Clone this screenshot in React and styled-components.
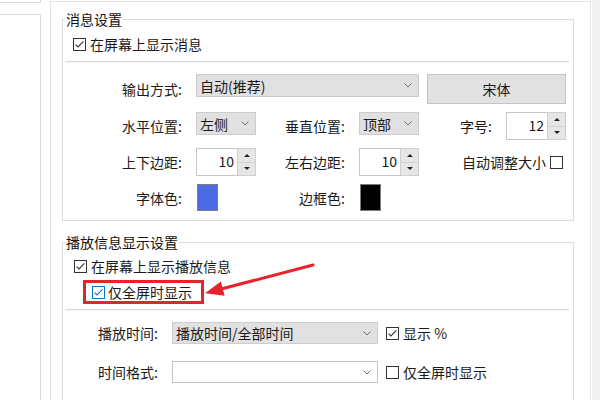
import React from 'react';
import styled, { createGlobalStyle } from 'styled-components';

const GlobalStyle = createGlobalStyle`
  html, body { margin: 0; padding: 0; background: #fff; }
  body {
    font-family: "Noto Sans CJK SC", "Noto Sans", sans-serif;
    font-size: 14px;
    color: #1a1a1a;
  }
  * { box-sizing: border-box; }
`;

const Page = styled.div`
  position: relative;
  display: flex;
  width: 600px;
  height: 400px;
  overflow: hidden;
`;

const LeftCol = styled.div`
  width: 41px;
  display: flex;
  flex-direction: column;
`;

const LeftTop = styled.div`
  height: 3px;
  border-right: 1px solid #d9d9d9;
  border-bottom: 1px solid #d9d9d9;
`;

const LeftList = styled.div`
  margin-top: 11px;
  flex: 1;
  border-top: 1px solid #d9d9d9;
  border-right: 1px solid #d9d9d9;
`;

const Main = styled.div`
  margin: 1px 0 0 9px;
  width: 541px;
  border: 1px solid #e3e3e3;
  border-bottom: none;
  padding: 10px 0 0 11px;
`;

const RightStrip = styled.div`
  flex: 1;
  margin-left: 1px;
  background: #f0f0f0;
`;

const Group = styled.fieldset`
  width: 512px;
  min-width: 0;
  margin: ${p => p.$top}px 0 0 0;
  padding: 0 0 ${p => p.$bottom}px 0;
  border: 1px solid #dcdcdc;
`;

const Legend = styled.legend`
  margin-left: 2px;
  padding: 0 1px;
  font-size: 14px;
  line-height: 14px;
  color: #111;
`;

const CheckRow = styled.div`
  display: flex;
  align-items: center;
  gap: 4px;
  height: 14px;
  line-height: 14px;
  margin-top: ${p => p.$top}px;
  padding-left: ${p => p.$left}px;
`;

const HighlightBox = styled.div`
  display: flex;
  align-items: center;
  gap: 3px;
  width: 121px;
  height: 24px;
  margin: 7px 0 0 20px;
  padding-left: 6px;
  border: 3px solid #e5242a;
  line-height: 14px;
`;

const Separator = styled.div`
  height: 2px;
  margin: ${p => p.$top}px 4px 0 2px;
  background: #dadada;
  border-bottom: 1px solid #f4f4f4;
`;

const FormGrid = styled.div`
  display: grid;
  grid-template-columns: ${p => p.$cols};
  grid-template-rows: ${p => p.$rows};
  row-gap: ${p => p.$gap}px;
  align-items: center;
  margin-top: 11px;
`;

const Label = styled.div`
  text-align: right;
  padding-right: 14px;
  line-height: 14px;
  white-space: nowrap;
`;

const SelectBox = styled.div`
  grid-column: ${p => p.$span || 'auto'};
  align-self: ${p => p.$align || 'center'};
  height: ${p => p.$h || 23}px;
  display: flex;
  align-items: center;
  justify-content: space-between;
  padding: 0 6px 0 3px;
  background: ${p => (p.$white ? '#fff' : '#e1e1e1')};
  border: 1px solid ${p => (p.$white ? '#c4c4c4' : '#cdcdcd')};
  line-height: 14px;
  white-space: nowrap;
`;

const PushButton = styled.div`
  grid-column: 5 / 7;
  height: 30px;
  margin-left: 8px;
  display: flex;
  align-items: center;
  justify-content: center;
  background: #e1e1e1;
  border: 1px solid #c4c4c4;
  line-height: 14px;
`;

const SpinWrap = styled.div`
  display: flex;
  height: 28px;
`;

const SpinField = styled.div`
  flex: 1;
  display: flex;
  align-items: center;
  justify-content: flex-end;
  padding: 0 3px 2px 0;
  background: #fff;
  border: 1px solid #c6c6c6;
  border-right: none;
  line-height: 14px;
`;

const SpinButtons = styled.div`
  width: 19px;
  display: flex;
  flex-direction: column;
  border: 1px solid #cfcfcf;
`;

const SpinButton = styled.div`
  flex: 1;
  display: flex;
  align-items: center;
  justify-content: center;
  background: #e6e6e6;
  & + & { border-top: 1px solid #d2d2d2; }
  &::after {
    content: '';
    border-left: 3px solid transparent;
    border-right: 3px solid transparent;
    ${p => (p.$down ? 'border-top: 3px solid #222;' : 'border-bottom: 3px solid #222;')}
  }
`;

const Swatch = styled.div`
  width: 21px;
  height: 27px;
  margin-left: 1px;
  background: ${p => p.$color};
  border: 1px solid #7d7d7d;
`;

const EndCheck = styled.div`
  grid-column: 5 / 7;
  justify-self: end;
  margin-right: 3px;
  display: flex;
  align-items: center;
  gap: 4px;
  line-height: 14px;
`;

const SideCheck = styled.div`
  display: flex;
  align-items: center;
  gap: 4px;
  margin-left: 8px;
  line-height: 14px;
  white-space: nowrap;
`;

const ArrowLayer = styled.svg`
  position: absolute;
  left: 200px;
  top: 255px;
  pointer-events: none;
`;

const Checkbox = ({ checked, blue }) => {
  const c = blue ? '#0a74d0' : '#333';
  return (
    <svg width="13" height="13" viewBox="0 0 13 13">
      <rect x="0.5" y="0.5" width="12" height="12" fill="#fff" stroke={c} />
      {checked && <polyline points="2.6,6.6 5,9 10.4,3.4" fill="none" stroke={c} strokeWidth="1.1" />}
    </svg>
  );
};

const Chevron = () => (
  <svg width="8" height="5" viewBox="0 0 8 5">
    <polyline points="0.5,0.5 4,4 7.5,0.5" fill="none" stroke="#707070" strokeWidth="1" />
  </svg>
);

const Select = ({ text, ...rest }) => (
  <SelectBox {...rest}>
    <span>{text}</span>
    <Chevron />
  </SelectBox>
);

const Spin = ({ value }) => (
  <SpinWrap>
    <SpinField>{value}</SpinField>
    <SpinButtons>
      <SpinButton />
      <SpinButton $down />
    </SpinButtons>
  </SpinWrap>
);

export default function App() {
  return (
    <Page>
      <GlobalStyle />
      <LeftCol>
        <LeftTop />
        <LeftList />
      </LeftCol>
      <Main>
        <Group $top={0} $bottom={9}>
          <Legend>消息设置</Legend>
          <CheckRow $top={11} $left={10}>
            <Checkbox checked />
            <span>在屏幕上显示消息</span>
          </CheckRow>
          <Separator $top={10} />
          <FormGrid $cols="133px 60px 103px 60px 87px 60px" $rows="30px 28px 28px 27px" $gap={8}>
            <Label>输出方式:</Label>
            <Select $span="2 / 5" $align="start" text="自动(推荐)" />
            <PushButton>宋体</PushButton>

            <Label>水平位置:</Label>
            <Select $align="start" text="左侧" />
            <Label>垂直位置:</Label>
            <Select $align="start" text="顶部" />
            <Label>字号:</Label>
            <Spin value="12" />

            <Label>上下边距:</Label>
            <Spin value="10" />
            <Label>左右边距:</Label>
            <Spin value="10" />
            <EndCheck>
              <span>自动调整大小</span>
              <Checkbox />
            </EndCheck>

            <Label>字体色:</Label>
            <Swatch $color="#4a6be3" />
            <Label>边框色:</Label>
            <Swatch $color="#000" />
          </FormGrid>
        </Group>

        <Group $top={14} $bottom={30}>
          <Legend>播放信息显示设置</Legend>
          <CheckRow $top={10} $left={11}>
            <Checkbox checked />
            <span>在屏幕上显示播放信息</span>
          </CheckRow>
          <HighlightBox>
            <Checkbox checked blue />
            <span>仅全屏时显示</span>
          </HighlightBox>
          <Separator $top={5} />
          <FormGrid $cols="109px 206px auto" $rows="22px 22px" $gap={17}>
            <Label>播放时间:</Label>
            <Select text="播放时间/全部时间" $h={22} />
            <SideCheck>
              <Checkbox checked />
              <span>显示 %</span>
            </SideCheck>

            <Label>时间格式:</Label>
            <Select text="" $h={22} $white />
            <SideCheck>
              <Checkbox />
              <span>仅全屏时显示</span>
            </SideCheck>
          </FormGrid>
        </Group>
      </Main>
      <RightStrip />
      <ArrowLayer width="120" height="45" viewBox="0 0 120 45">
        <line x1="113" y1="10" x2="22" y2="33.8" stroke="#e8232b" strokeWidth="3" strokeLinecap="round" />
        <polygon points="5,38.3 24.6,40.8 20.9,26.6" fill="#e8232b" />
      </ArrowLayer>
    </Page>
  );
}
